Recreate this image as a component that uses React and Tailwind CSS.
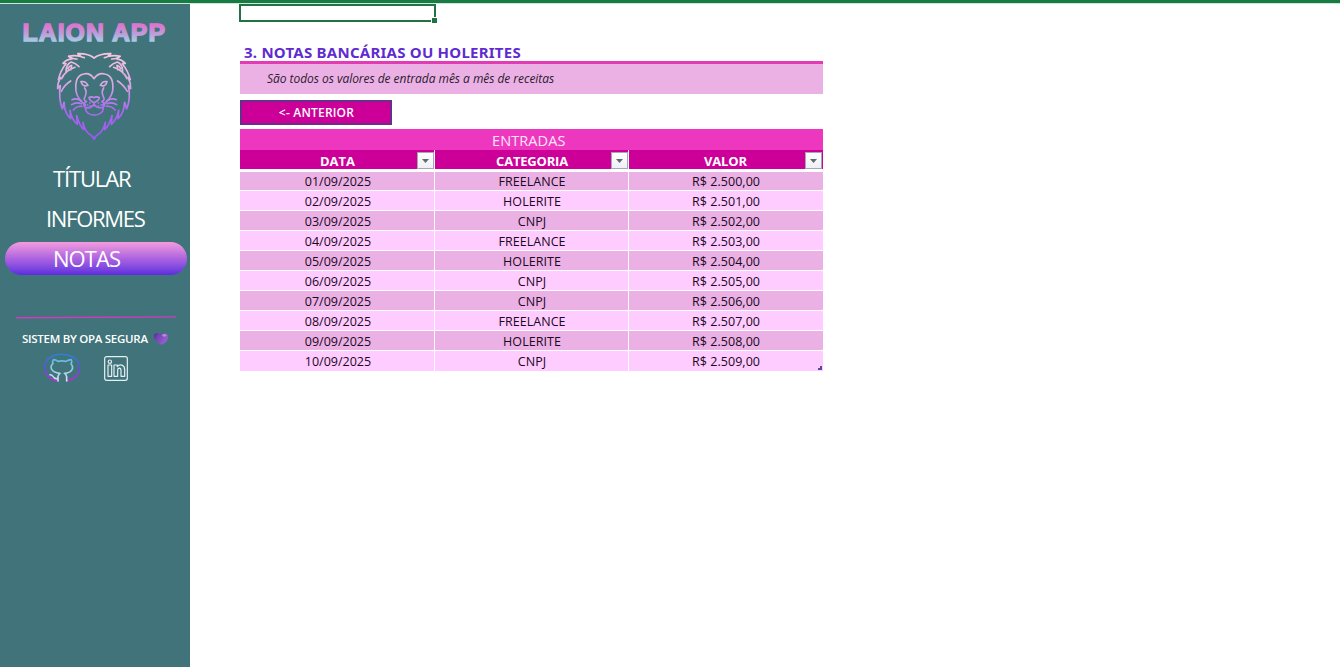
import React from "react";

const categories = ["FREELANCE", "HOLERITE", "CNPJ", "FREELANCE", "HOLERITE", "CNPJ", "CNPJ", "FREELANCE", "HOLERITE", "CNPJ"];
const rows = categories.map((category, i) => ({
  date: `${String(i + 1).padStart(2, "0")}/09/2025`,
  category,
  value: `R$ 2.50${i},00`,
}));

function Wordmark() {
  return (
    <svg className="mt-[17px] block" width="190" height="24" viewBox="0 0 190 24" role="img">
      <defs>
        <linearGradient id="word" x1="0" y1="4" x2="0" y2="21" gradientUnits="userSpaceOnUse">
          <stop offset="0" stopColor="#dc75cf" />
          <stop offset="0.5" stopColor="#bf9bd9" />
          <stop offset="1" stopColor="#a3cfe6" />
        </linearGradient>
      </defs>
      <text x="22.500" y="20.300" textLength="143.500" lengthAdjust="spacingAndGlyphs" fontFamily="Liberation Sans, sans-serif" fontWeight="700" fontSize="23" letterSpacing="1" fill="url(#word)" stroke="url(#word)" strokeWidth="1.4">
        LAION APP
      </text>
    </svg>
  );
}

function Lion() {
  return (
    <svg className="ml-[50px] block" width="90" height="100" viewBox="0 0 270 300" fill="none" stroke="url(#lion)" strokeWidth="5" strokeLinecap="round" strokeLinejoin="round">
      <defs>
        <linearGradient id="lion" x1="0" y1="25" x2="0" y2="283" gradientUnits="userSpaceOnUse">
          <stop offset="0" stopColor="#f6c6df" />
          <stop offset="0.35" stopColor="#dba9e3" />
          <stop offset="0.65" stopColor="#a96bee" />
          <stop offset="1" stopColor="#9d55f5" />
        </linearGradient>
      </defs>
      <path d="M132 39 Q115 25 84 26 L91 34 Q73 30 56 34 L67 41 Q48 44 39 55 L48 56 Q31 77 25 104 L32 97 Q22 114 23 131 L31 122 Q25 160 37 192 L42 172 Q43 205 62 221 L60 196 Q65 224 82 238 L80 212 Q89 242 101 254 L99 232 Q104 258 119 268 Q127 272 132 283 Q137 272 145 268 Q160 258 166 232 L164 254 Q177 242 186 212 L184 238 Q200 224 206 196 L204 221 Q222 205 224 172 L230 192 Q243 160 235 122 L242 131 Q243 114 234 97 L241 104 Q234 77 217 56 L226 55 Q216 44 199 41 L210 34 Q194 30 175 34 L182 26 Q151 25 132 39" />
      <path d="M84 26 Q91 37 103 38 M56 34 Q66 43 81 42 M182 26 Q175 37 163 38 M210 34 Q199 43 185 42" />
      <path d="M48 79 Q48 58 64 51 Q78 55 87 65 M35 101 Q44 78 75 67 M54 71 Q58 62 65 61 L63 74 M218 79 Q218 58 202 51 Q188 55 179 65 M231 101 Q222 78 191 67 M212 71 Q208 62 201 61 L203 74" />
      <path d="M132 101 Q119 82 101 87 C78 91 75 118 78 138 C81 156 94 171 106 180 M132 101 Q145 82 164 87 C189 91 190 118 188 138 C184 156 171 171 158 180" />
      <path d="M93 110 Q106 107 114 121 Q99 127 93 110 M171 110 Q158 107 151 121 Q166 127 171 110 M104 129 Q112 141 105 155 Q99 164 108 169 M161 129 Q153 141 160 155 Q166 164 157 169" />
      <path d="M117 158 Q124 153 132 158 Q140 153 148 158 Q145 168 132 173 Q119 168 117 158 M132 173 V182 M132 179 Q116 196 103 184 Q98 176 109 170 M132 179 Q148 196 162 184 Q168 176 156 170 M106 190 C108 217 158 217 160 190" />
      <path d="M94 168 Q81 158 66 164 M94 176 Q78 170 65 179 M96 184 Q81 182 70 195 M171 168 Q184 158 199 164 M171 176 Q187 170 200 179 M169 184 Q184 182 195 195 M112 180 h1 M119 174 h1 M119 183 h1 M145 174 h1 M145 183 h1 M153 180 h1" />
      <path d="M34 139 Q44 119 62 108 M232 139 Q220 119 203 108" />
    </svg>
  );
}

function NavItem({ children, className }) {
  return <div className={`h-10 whitespace-nowrap text-[22px] leading-[40px] text-white ${className}`}>{children}</div>;
}

function Github() {
  return (
    <svg width="38" height="30" viewBox="0 0 114 90" fill="none" strokeLinecap="round" strokeLinejoin="round">
      <defs>
        <linearGradient id="ring" x1="0" y1="0" x2="0" y2="1">
          <stop offset="0" stopColor="#2f7fd6" />
          <stop offset="0.5" stopColor="#5a55d5" />
          <stop offset="1" stopColor="#b52fd2" />
        </linearGradient>
        <linearGradient id="cat" x1="0" y1="0" x2="0" y2="1">
          <stop offset="0" stopColor="#62b9df" />
          <stop offset="1" stopColor="#dce0f2" />
        </linearGradient>
      </defs>
      <path d="M40 83 C-8 71 -6 16 38 6 C76 -3 110 17 110 44 C110 64 96 77 73 83" stroke="url(#ring)" strokeWidth="5" />
      <path d="M45 84 V70 Q47 64 51 61 C20 58 21 39 30 32 Q27 26 31 20 Q39 20 45 25 Q57 22 69 25 Q76 20 85 20 Q88 27 84 32 C95 46 85 60 64 61 Q70 64 71 71 V84 M45 76 Q34 79 29 69 Q26 65 21 65" stroke="url(#cat)" strokeWidth="5" />
    </svg>
  );
}

function Linkedin() {
  return (
    <svg width="24" height="25" viewBox="0 0 72 75" fill="none" stroke="#e4f0f3" strokeWidth="3.6" strokeLinejoin="round">
      <rect x="2" y="2" width="68" height="71" rx="6" />
      <path d="M12 27 H23 V61 H12 Z M30 27 H40 V32 C47 23 62 26 62 41 V61 H51 V43 C51 34 41 34 41 43 V61 H30 Z" />
      <circle cx="17.500" cy="17" r="5" />
    </svg>
  );
}

function Heart() {
  return (
    <svg width="16" height="14" viewBox="0 0 48 42">
      <defs>
        <linearGradient id="heart" x1="0" y1="0" x2="1" y2="0.5">
          <stop offset="0" stopColor="#4b2785" />
          <stop offset="0.3" stopColor="#7141b4" />
          <stop offset="1" stopColor="#9a62cf" />
        </linearGradient>
      </defs>
      <path d="M26 38 C12 33 2 20 3 11 C5 1 18 1 23 9 C29 0 43 1 45 11 C46 23 38 33 26 38 Z" fill="url(#heart)" />
      <ellipse cx="34" cy="10" rx="6" ry="4" fill="#d0a1e8" opacity="0.7" />
    </svg>
  );
}

function Sidebar() {
  return (
    <aside className="flex h-[663px] w-[190px] shrink-0 flex-col overflow-hidden bg-[#40737a]">
      <Wordmark />
      <Lion />
      <nav className="mt-[13px] font-['Open_Sans',sans-serif]">
        <NavItem className="pl-[53px] tracking-[-1.15px]">TÍTULAR</NavItem>
        <NavItem className="pl-[46px] tracking-[-1.3px]">INFORMES</NavItem>
        <div className="ml-[5px] mt-[4px] h-[33px] w-[182px] rounded-full bg-linear-to-b from-[#f49bdd] via-[#ad63df] to-[#5f29df] pl-[48px] text-[22px] leading-[32px] tracking-[-0.95px] text-white">
          NOTAS
        </div>
      </nav>
      <svg className="ml-[15px] mt-[41px] block shrink-0" width="162" height="3" viewBox="0 0 162 3">
        <path d="M1 1.700 L161 0.900" stroke="#cf3cc0" strokeWidth="1.400" />
      </svg>
      <div className="mt-[11px] flex h-[18px] items-center pl-[22px] font-['Open_Sans',sans-serif] text-[11.5px] font-semibold tracking-[-0.28px] text-white">
        <span className="w-[131px] whitespace-nowrap">SISTEM BY OPA SEGURA</span>
        <Heart />
      </div>
      <div className="mt-[5px] flex h-[30px] items-center gap-[23px] pl-[43px]">
        <Github />
        <Linkedin />
      </div>
    </aside>
  );
}

function FilterButton({ last }) {
  return (
    <span className={`absolute top-[2px] flex h-[17px] w-[17px] items-center justify-center border border-[#a5a7b5] bg-linear-to-b from-white to-[#edf0f5] ${last ? "right-[1px]" : "right-0"}`}>
      <svg width="7" height="4" viewBox="0 0 7 4"><path d="M0 0 H7 L3.500 4 Z" fill="#66686b" /></svg>
    </span>
  );
}

const headers = [
  { label: "DATA", className: "pl-[1px] tracking-[0px]" },
  { label: "CATEGORIA", className: "pl-[1px] tracking-[-0.2px]" },
  { label: "VALOR", className: "pr-[1px] tracking-[-0.1px]" },
];
const cellStyles = ["pl-[2px]", "pl-[1px] tracking-[0.04px]", "tracking-[0.05px]"];

function rowStyle(i) {
  if (i === 0) return "h-[18px] grid-rows-[18px] leading-[19px]";
  if (i === rows.length - 1) return "h-[21px] grid-rows-[20px] border-t leading-[22px]";
  return "h-5 grid-rows-[19px] border-t leading-[22px]";
}

function Entries() {
  return (
    <section className="mt-[4px] w-[583px] font-['Open_Sans',sans-serif]">
      <div className="h-[21px] bg-[#ee37bf] pl-[252px] text-[14.5px] leading-[24px] tracking-[0.1px] text-[#ffe5fb]">ENTRADAS</div>
      <div className="grid h-[19px] grid-cols-[194px_193px_194px] grid-rows-[19px] gap-px bg-white">
        {headers.map(({ label, className }, i) => (
          <div key={label} className={`relative bg-[#cc0099] text-center text-[13px] font-bold leading-[22px] text-white ${className}`}>
            {label}
            <FilterButton last={i === 2} />
          </div>
        ))}
      </div>
      <div className="relative mt-[3px]">
        {rows.map((row, i) => (
          <div key={row.date} className={`grid grid-cols-[194px_193px_194px] gap-px border-white text-center text-[12.5px] text-[#1a081c] ${rowStyle(i)}`}>
            {[row.date, row.category, row.value].map((value, j) => (
              <div key={j} className={`${i % 2 ? "bg-[#ffccff]" : "bg-[#ebb1e5]"} ${cellStyles[j]}`}>
                {value}
              </div>
            ))}
          </div>
        ))}
        <svg className="absolute bottom-[1px] right-[1px]" width="4" height="4"><path d="M2 0 H4 V4 H0 V2 H2 Z" fill="#5a4a9f" /></svg>
      </div>
    </section>
  );
}

export default function App() {
  return (
    <div className="h-[667px] w-[1340px] overflow-hidden bg-white">
      <div className="h-[4px] border-b border-[#cfe5d7] bg-[#187b43]" />
      <div className="flex">
        <Sidebar />
        <main className="pl-[50px]">
          <div className="relative -ml-px h-[18px] w-[197px] border-2 border-[#217346]">
            <span className="absolute -bottom-[4px] -right-[4px] h-[7px] w-[7px] border border-white bg-[#217346]" />
          </div>
          <h1 className="mt-[18px] h-[21px] whitespace-nowrap pl-[4px] font-['Noto_Sans',sans-serif] text-[15px] font-bold leading-[24px] tracking-[-0.2px] text-[#5f2bd0]">
            <span className="tracking-[0.24px]">3. NOTAS BANCÁRIAS OU HOLERITES</span>
          </h1>
          <p className="h-[33px] w-[583px] border-t-[3px] border-[#e23bb5] bg-[#ebb1e5] pl-[27px] font-['Open_Sans',sans-serif] text-[12px] italic leading-[29px] text-[#2c1a31]">
            <span className="tracking-[-0.04px]">São todos os valores de entrada mês a mês de receitas</span>
          </p>
          <button className="mt-[6px] block h-[25px] w-[152px] border-2 border-[#6b2d8b] bg-[#cc0099] pl-[1px] text-center font-['Open_Sans',sans-serif] text-[12px] font-semibold leading-[21px] tracking-[0.2px] text-white">
            &lt;- ANTERIOR
          </button>
          <Entries />
        </main>
      </div>
    </div>
  );
}
